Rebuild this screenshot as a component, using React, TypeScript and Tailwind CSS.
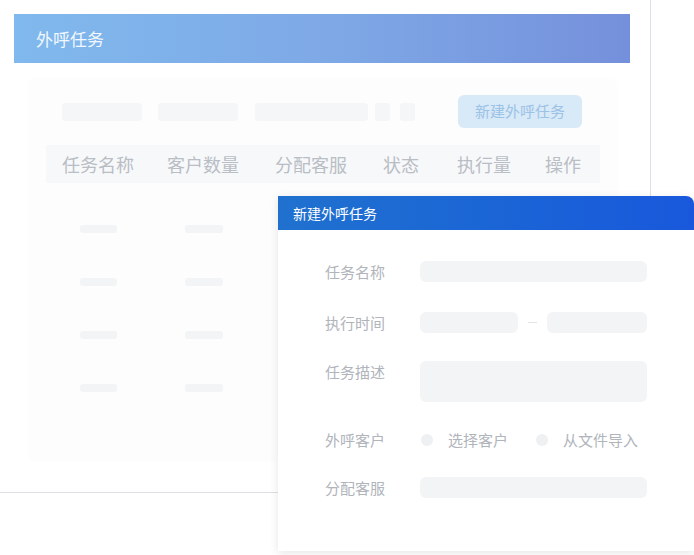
const FONT = { fontFamily: '"Noto Sans CJK SC", "Noto Sans", sans-serif' };

const COLUMNS = [
  { label: "任务名称", x: "w-[105px]" },
  { label: "客户数量", x: "w-[108px]" },
  { label: "分配客服", x: "w-[108px]" },
  { label: "状态", x: "w-[74px]" },
  { label: "执行量", x: "w-[88px]" },
  { label: "操作", x: "w-[60px]" },
];

function FormRow({ label, children, top = false }: { label: string; children: React.ReactNode; top?: boolean }) {
  return (
    <div className={`flex ${top ? "items-start" : "items-center"}`}>
      <div className={`w-[142px] shrink-0 pl-[47px] text-[15px] leading-[20px] text-[#b0b4bb] whitespace-nowrap ${top ? "pt-[1px]" : ""}`}>
        {label}
      </div>
      {children}
    </div>
  );
}

function Field({ className = "" }: { className?: string }) {
  return <div className={`h-[21px] rounded-[6px] bg-[#f3f4f6] ${className}`} />;
}

function Radio({ label }: { label: string }) {
  return (
    <div className="flex items-center">
      <div className="h-[12px] w-[12px] rounded-full bg-[#eef0f2]" />
      <span className="ml-[15px] text-[15px] leading-[20px] text-[#b0b4bb]">{label}</span>
    </div>
  );
}

export default function App() {
  return (
    <div className="relative h-[555px] w-[694px] overflow-hidden bg-white" style={FONT}>
      {/* background list page */}
      <div className="h-[493px] w-[651px] border-r border-b border-[#dcdfe4] pl-[14px] pt-[14px]">
        <div className="flex h-[49px] w-[616px] items-center bg-gradient-to-r from-[#80b9ed] via-[#7ea9e6] to-[#7590db] pl-[22px] text-[17px] text-white/90">
          外呼任务
        </div>

        <div className="ml-[16px] mt-[17px] h-[380px] w-[586px] rounded-[4px] bg-[#fdfdfe] shadow-[0_0_6px_rgba(0,0,0,0.025)]">
          <div className="flex items-center pl-[32px] pt-[15px]">
            <div className="h-[18px] w-[80px] rounded-[4px] bg-[#f5f6f8]" />
            <div className="ml-[16px] h-[18px] w-[80px] rounded-[4px] bg-[#f5f6f8]" />
            <div className="ml-[17px] h-[18px] w-[113px] rounded-[4px] bg-[#f5f6f8]" />
            <div className="ml-[7px] h-[18px] w-[15px] rounded-[3px] bg-[#f5f6f8]" />
            <div className="ml-[10px] h-[18px] w-[15px] rounded-[3px] bg-[#f5f6f8]" />
            <div className="ml-[43px] flex h-[33px] w-[124px] items-center justify-center rounded-[6px] bg-[#d8e9f8] text-[15px] text-[#9cc2e6]">
              新建外呼任务
            </div>
          </div>

          <div className="ml-[16px] mt-[17px] flex h-[38px] w-[554px] items-center bg-[#f7f8fa] pl-[16px] text-[18px] text-[#b9bdc4]">
            {COLUMNS.map((c) => (
              <div key={c.label} className={`${c.x} shrink-0 whitespace-nowrap`}>
                {c.label}
              </div>
            ))}
          </div>

          <div className="mt-[42px] flex flex-col gap-[45px] pl-[50px]">
            {[0, 1, 2, 3].map((i) => (
              <div key={i} className="flex h-[8px] items-center">
                <div className="h-[8px] w-[37px] rounded-[3px] bg-[#f3f4f6]" />
                <div className="ml-[68px] h-[8px] w-[38px] rounded-[3px] bg-[#f3f4f6]" />
              </div>
            ))}
          </div>
        </div>
      </div>

      {/* dialog overlay */}
      <div className="absolute left-[278px] top-[196px] h-[355px] w-[416px] rounded-tr-[8px] bg-white shadow-[0_2px_10px_rgba(0,0,0,0.1)]">
        <div className="flex h-[34px] items-center rounded-tr-[8px] bg-gradient-to-r from-[#2071cf] to-[#1958dc] pl-[15px] text-[14px] text-white">
          新建外呼任务
        </div>

        <div className="flex flex-col pt-[31px]">
          <FormRow label="任务名称">
            <Field className="w-[227px]" />
          </FormRow>

          <div className="mt-[30px]">
            <FormRow label="执行时间">
              <Field className="w-[98px]" />
              <div className="mx-[10px] h-[1px] w-[9px] bg-[#e3e5e8]" />
              <Field className="w-[100px]" />
            </FormRow>
          </div>

          <div className="mt-[28px]">
            <FormRow label="任务描述" top>
              <div className="h-[41px] w-[227px] rounded-[6px] bg-[#f3f4f6]" />
            </FormRow>
          </div>

          <div className="mt-[28px]">
            <FormRow label="外呼客户">
              <div className="flex items-center gap-[28px] pl-[1px]">
                <Radio label="选择客户" />
                <Radio label="从文件导入" />
              </div>
            </FormRow>
          </div>

          <div className="mt-[27px]">
            <FormRow label="分配客服">
              <Field className="w-[227px]" />
            </FormRow>
          </div>
        </div>
      </div>
    </div>
  );
}
